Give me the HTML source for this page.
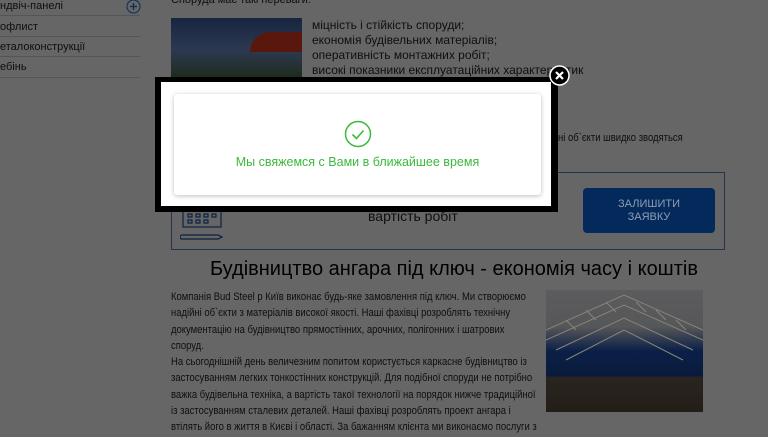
<!DOCTYPE html>
<html style="width:768px;height:437px;overflow:hidden"><head><meta charset="utf-8"><style>
*{margin:0;padding:0;box-sizing:border-box}
body{width:768px;height:437px;overflow:hidden;background:#666;font-family:"Liberation Sans",sans-serif;position:relative;color:#111}
.a{position:absolute;white-space:nowrap}
.side div{position:absolute;left:0;width:140px;height:20px;border-bottom:1px solid #50565e;font-size:11px;color:#0e0e0e}
.ul{font-size:12px;line-height:15px;color:#0e0e0e}
.p{font-size:11px;line-height:16.3px;color:#0e0e0e;transform:scaleX(0.86);transform-origin:0 0}
</style></head><body>
<div class="side">
<div style="top:-4px;padding-top:4px">ндвіч-панелі</div>
<div style="top:17px;padding-top:4px">офлист</div>
<div style="top:37px;padding-top:4px">еталоконструкції</div>
<div style="top:57px;padding-top:4px;height:21px">ебінь</div>
</div>
<svg class="a" style="left:126px;top:-1px" width="15" height="15"><circle cx="7.5" cy="7.5" r="6.5" fill="none" stroke="#0b2c54" stroke-width="1"/><path d="M4 7.5h7M7.5 4v7" stroke="#0b2c54" stroke-width="1.3"/></svg>
<div class="a" style="left:171px;top:-6px;font-size:11px;color:#0e0e0e">Споруда має такі переваги:</div>
<div class="a" style="left:171px;top:18px;width:131px;height:82px;background:linear-gradient(180deg,#182540 0%,#2c3950 40%,#1e2a18 75%,#11170d 100%)"></div>
<div class="a" style="left:250px;top:32px;width:52px;height:20px;background:#5a170d;border-radius:30px 0 0 0"></div>
<div class="a ul" style="left:312px;top:18px">міцність і стійкість споруди;<br>економія будівельних матеріалів;<br>оперативність монтажних робіт;<br>високі показники експлуатаційних характеристик</div>
<div class="a p" style="left:545px;top:130px">дібні об`єкти швидко зводяться</div>
<div class="a p" style="left:545px;top:146px">ль.</div>
<div class="a" style="left:171px;top:172px;width:554px;height:78px;border:1px solid #24334d"></div>
<svg class="a" style="left:180px;top:205px" width="46" height="40"><g fill="none" stroke="#0c2044" stroke-width="1.2"><rect x="3" y="0" width="38" height="22"/><path d="M8 2h4v3h-4zM16 2h4v3h-4zM24 2h4v3h-4zM32 2h4v3h-4zM8 9h4v3h-4zM16 9h4v3h-4zM24 9h4v3h-4zM32 9h4v3h-4zM8 15h4v3h-4zM16 15h4v3h-4zM24 15h4v3h-4z"/><path d="M2 30h36l4 2-4 2H2a2 2 0 0 1 0-4z"/></g></svg>
<div class="a" style="left:368px;top:208px;font-size:14px;color:#0e0e0e">вартість робіт</div>
<div class="a" style="left:530px;top:193px;font-size:14px;color:#0e0e0e">я</div>
<div class="a" style="left:583px;top:188px;width:132px;height:45px;background:#032a5a;border-radius:4px;color:#8e9db4;font-size:11px;text-align:center;padding-top:10px;line-height:13px">ЗАЛИШИТИ<br>ЗАЯВКУ</div>
<div class="a" style="left:210px;top:258px;font-size:20px;color:#000">Будівництво ангара під ключ - економія часу і коштів</div>
<div class="a p" style="left:171px;top:289px">Компанія Bud Steel р Київ виконає будь-яке замовлення під ключ. Ми створюємо<br>надійні об`єкти з матеріалів високої якості. Наші фахівці розроблять технічну<br>документацію на будівництво прямостінних, арочних, полігонних і шатрових<br>споруд.<br>На сьогоднішній день величезним попитом користується каркасне будівництво із<br>застосуванням легких тонкостінних конструкцій. Для подібної споруди не потрібно<br>важка будівельна техніка, а вартість такої технології на порядок нижче традиційної<br>із застосуванням сталевих деталей. Наші фахівці розроблять проект ангара і<br>втілять його в життя в Києві і області. За бажанням клієнта ми виконаємо послуги з<br>електрифікації, підключення до центрального водопостачання та опалення, а</div>
<div class="a" style="left:546px;top:290px;width:157px;height:122px;background:linear-gradient(180deg,#5c5c5e 0%,#565759 30%,#0b2048 50%,#0a1a3c 70%,#2a2420 72%,#231e18 100%)"></div>
<svg class="a" style="left:546px;top:290px" width="157" height="80"><g stroke="#8a8478" stroke-width="1" fill="none"><path d="M0 40L78 5L157 40M0 50L78 15L157 50M10 60L78 28L147 60M20 70L78 40L137 70"/><path d="M20 30l10 10M40 20l10 10M60 12l10 10M90 12l10 10M110 20l10 10M130 30l10 10"/></g></svg>
<div class="a" style="left:155px;top:77px;width:403px;height:135px;background:#000"></div>
<div class="a" style="left:161px;top:82px;width:390px;height:124px;background:#fff"></div>
<div class="a" style="left:174px;top:94px;width:367px;height:101px;background:#fff;border-radius:3px;box-shadow:0 1px 5px rgba(0,0,0,0.25)"></div>
<svg class="a" style="left:344px;top:120px" width="28" height="28"><circle cx="14" cy="14" r="12.5" fill="none" stroke="#3cb93c" stroke-width="1.5"/><path d="M8.5 14.5l4 4 7-8" fill="none" stroke="#3cb93c" stroke-width="1.6"/></svg>
<div class="a" style="left:174px;top:155px;width:367px;text-align:center;font-size:12.5px;color:#3cb93c">Мы свяжемся с Вами в ближайшее время</div>
<svg class="a" style="left:549px;top:65px" width="21" height="21"><circle cx="10.5" cy="10.5" r="9.5" fill="#000" stroke="#fff" stroke-width="1.5"/><path d="M7 7l7 7M14 7l-7 7" stroke="#fff" stroke-width="2.2"/></svg>
</body></html>
